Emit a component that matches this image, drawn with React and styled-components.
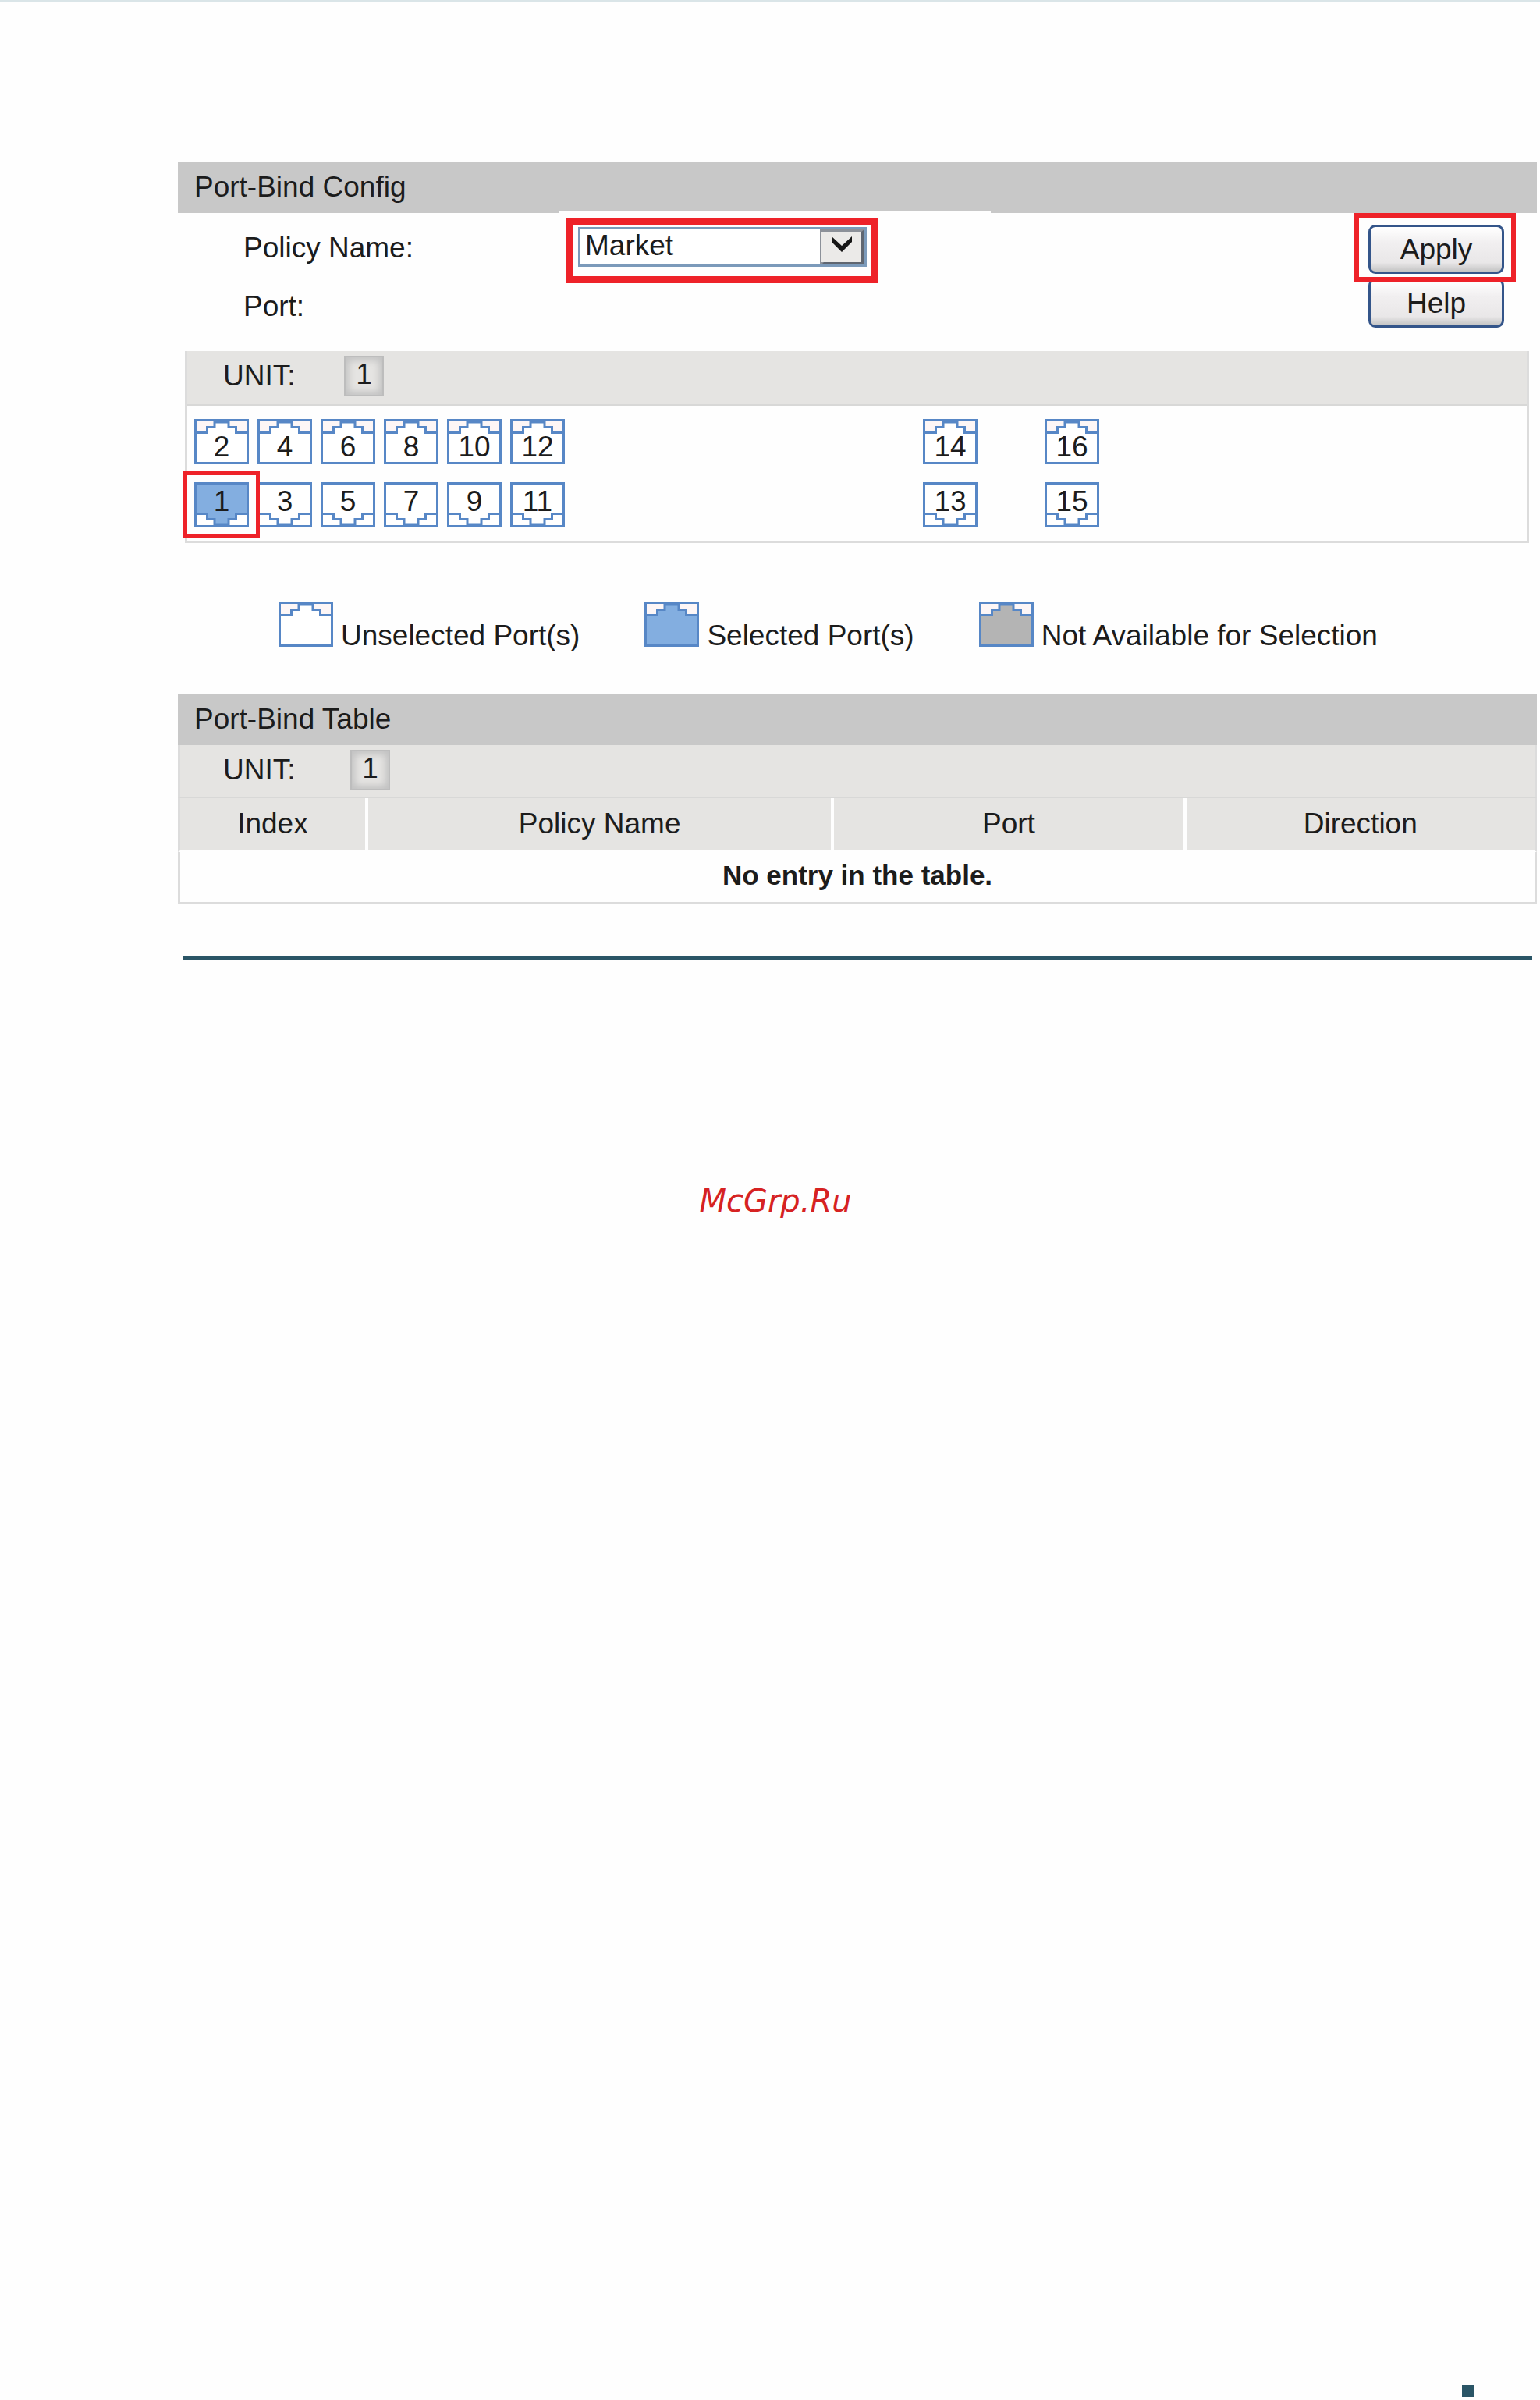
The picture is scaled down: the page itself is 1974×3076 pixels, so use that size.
import React, { useState } from 'react';
import styled, { createGlobalStyle, css } from 'styled-components';

const GlobalStyle = createGlobalStyle`
  * {
    box-sizing: border-box;
  }

  body {
    margin: 0;
    background: #fefefe;
    color: #1c1c1c;
    font-family: 'Liberation Sans', Arial, sans-serif;
    font-size: 37px;
  }

  button,
  select {
    margin: 0;
    color: inherit;
    font-family: inherit;
    font-size: inherit;
  }
`;

const Page = styled.div`
  min-height: 100vh;
  display: flex;
  flex-direction: column;
  border-top: 3px solid #dae5e8;
`;

const Main = styled.main`
  padding: 204px 4px 0 228px;
`;

const SectionTitle = styled.h2`
  height: 66px;
  margin: 0;
  padding-left: 21px;
  background: #c8c8c8;
  font-size: 37px;
  font-weight: 400;
  line-height: 66px;
`;

const ConfigForm = styled.form`
  display: grid;
  grid-template-columns: 405px 553px 1fr;
  grid-template-rows: 82px 75px;
  padding: 0 27px 0 84px;
`;

const labelText = css`
  align-self: end;
  line-height: 75px;
`;

const FieldLabel = styled.label`
  ${labelText}
`;

const FieldName = styled.span`
  ${labelText}
  grid-row: 2;
`;

const FieldCell = styled.div`
  grid-row: span 2;
  align-self: start;
  margin-top: -3px;
  padding: 9px;
  background: #fefefe;
`;

const Highlight = styled.div`
  position: relative;
  z-index: 1;
  width: fit-content;
  border: ${({ $thick }) => $thick}px solid #ee2229;
  padding: ${({ $pad }) => $pad};
`;

const SelectBox = styled.div`
  position: relative;
  display: flex;
`;

const Select = styled.select`
  width: 370px;
  height: 51px;
  padding: 0 60px 4px 6px;
  border: 3px solid #7b9aba;
  border-radius: 0;
  background: #fff;
  font-size: 37px;
  appearance: none;
`;

const SelectArrow = styled.svg`
  position: absolute;
  top: 3px;
  right: 3px;
  pointer-events: none;
`;

const Actions = styled.div`
  grid-row: 1 / span 2;
  grid-column: 3;
  display: flex;
  flex-direction: column;
  align-items: flex-end;
`;

const ActionButton = styled.button`
  display: block;
  width: 174px;
  height: 63px;
  padding: 0;
  border: 3px solid #34558a;
  border-radius: 9px;
  background: linear-gradient(#ffffff, #f1eff0 35%, #e9e7e8 80%, #c4c4c4);
  line-height: 57px;
`;

const HelpButton = styled(ActionButton)`
  margin: -4px 15px 0 0;
`;

const PortPanel = styled.section`
  margin: 20px 10px 0 9px;
  border: solid #dcdcdc;
  border-width: 0 3px 3px;
`;

const UnitBar = styled.div`
  display: flex;
  height: ${({ $height }) => $height}px;
  padding: 0 0 0 ${({ $inset }) => $inset}px;
  border-bottom: 2px solid #d8d8d7;
  background: #e5e4e2;
`;

const UnitLabel = styled.span`
  width: ${({ $width }) => $width}px;
  line-height: 64px;
`;

const UnitButton = styled.button`
  width: 51px;
  height: 52px;
  margin-top: 6px;
  padding: 0 0 4px;
  border: 2px solid #bdbdbd;
  background: #e5e4e2;
  box-shadow: inset 0 0 10px 4px #c2c2c2;
  line-height: 42px;
`;

const PortArea = styled.div`
  display: flex;
  padding: 17px 9px;
`;

const PortBank = styled.div`
  display: grid;
  grid-auto-flow: column;
  grid-template-rows: 58px 58px;
  gap: 23px 11px;
  margin-left: ${({ $offset }) => $offset}px;
`;

const PortButton = styled.button`
  position: relative;
  display: grid;
  width: 70px;
  height: 58px;
  padding: 0;
  border: 0;
  background: none;

  > svg,
  > span {
    grid-area: 1 / 1;
  }
`;

const PortNumber = styled.span`
  z-index: 1;
  padding-top: ${({ $lower }) => ($lower ? 4 : 15)}px;
  line-height: 42px;
`;

const PortMark = styled.i`
  position: absolute;
  inset: -14px;
  z-index: 2;
  border: 5px solid #ee2229;
`;

const Legend = styled.ul`
  display: flex;
  gap: 83px;
  height: 65px;
  margin: 75px 0 53px;
  padding: 0 0 0 129px;
  list-style: none;
`;

const LegendItem = styled.li`
  display: flex;
  gap: 10px;
`;

const LegendText = styled.span`
  align-self: flex-end;
  line-height: 42px;
  white-space: nowrap;
`;

const TableUnitBar = styled(UnitBar)`
  border-right: 3px solid #dcdcdc;
  border-left: 3px solid #dcdcdc;
`;

const Table = styled.table`
  width: 100%;
  border-spacing: 0;
  table-layout: fixed;
  text-align: center;
`;

const HeadCell = styled.th`
  width: ${({ $width }) => $width};
  padding: 0 0 1px;
  border-right: 4px solid #fefefe;
  border-bottom: 2px solid #fefefe;
  background: #e5e4e2;
  font-weight: 400;
  line-height: 66px;

  &:first-child {
    border-left: 3px solid #dcdcdc;
  }

  &:last-child {
    border-right: 3px solid #dcdcdc;
  }
`;

const EmptyCell = styled.td`
  padding: 0 0 4px;
  border: solid #dcdcdc;
  border-width: 0 3px 3px;
  font-size: 35px;
  font-weight: 700;
  line-height: 60px;
`;

const Rule = styled.hr`
  height: 6px;
  margin: 66px 6px 0;
  border: 0;
  background: #2a5566;
`;

const SiteMark = styled.p`
  margin: 284px 0 0;
  padding-left: 14px;
  color: #d62222;
  font-family: 'DejaVu Sans', Verdana, sans-serif;
  font-size: 40px;
  font-style: italic;
  line-height: 48px;
  text-align: center;
`;

const Footer = styled.footer`
  display: flex;
  justify-content: flex-end;
  margin-top: auto;
  padding: 0 85px 4px 0;
`;

const FooterSquare = styled.span`
  width: 15px;
  height: 15px;
  background: #2a5566;
`;

const banks = [
  { offset: 0, ports: [2, 1, 4, 3, 6, 5, 8, 7, 10, 9, 12, 11] },
  { offset: 459, ports: [14, 13] },
  { offset: 86, ports: [16, 15] },
];

const columns = [
  { name: 'Index', width: '14%' },
  { name: 'Policy Name', width: '34.3%' },
  { name: 'Port', width: '25.9%' },
  { name: 'Direction', width: 'auto' },
];

const fills = {
  free: '#ffffff',
  selected: '#83aee0',
  disabled: '#b4b4b4',
};

// RJ45 socket, the latch points up unless lower is set
const PortIcon = ({ state = 'free', lower = false }) => (
  <svg width="70" height="58" viewBox="0 0 70 58" aria-hidden="true">
    <g transform={lower ? 'translate(0 58) scale(1 -1)' : undefined} stroke="#5787c6">
      <rect x="1.5" y="1.5" width="67" height="55" fill={lower ? '#ffffff' : '#fdf6f6'} strokeWidth="3" />
      <path
        d="M1.5 17.5H16.5V10.5H26V4H44V10.5H53.5V17.5H68.5V56.5H1.5Z"
        fill={fills[state]}
        strokeWidth="3"
      />
      <path d="M25 2.5H45" strokeWidth="5" />
    </g>
  </svg>
);

const Unit = ({ as: Bar = UnitBar, height, inset, labelWidth }) => (
  <Bar $height={height} $inset={inset}>
    <UnitLabel $width={labelWidth}>UNIT:</UnitLabel>
    <UnitButton type="button">1</UnitButton>
  </Bar>
);

const App = () => {
  const [policy, setPolicy] = useState('Market');
  const [selected, setSelected] = useState([1]);

  const togglePort = (port) => {
    setSelected((current) =>
      current.includes(port) ? current.filter((p) => p !== port) : [...current, port]
    );
  };

  return (
    <>
      <GlobalStyle />
      <Page>
        <Main>
          <SectionTitle>Port-Bind Config</SectionTitle>
          <ConfigForm onSubmit={(e) => e.preventDefault()}>
            <FieldLabel htmlFor="policy">Policy Name:</FieldLabel>
            <FieldCell>
              <Highlight $thick={9} $pad="3px 6px 12px">
                <SelectBox>
                  <Select id="policy" value={policy} onChange={(e) => setPolicy(e.target.value)}>
                    <option>Market</option>
                  </Select>
                  <SelectArrow width="57" height="45" viewBox="0 0 57 45" aria-hidden="true">
                    <rect width="57" height="45" fill="#8c9199" />
                    <path d="M57 0V45H2L5 42H53V3Z" fill="#5f6670" />
                    <rect x="2" y="3" width="51" height="39" fill="#ebeae8" />
                    <path d="M15 9L28 21L41 9V16L28 29L15 16Z" fill="#161616" />
                  </SelectArrow>
                </SelectBox>
              </Highlight>
            </FieldCell>
            <FieldName>Port:</FieldName>
            <Actions>
              <Highlight $thick={6} $pad="9px 9px 4px 12px">
                <ActionButton type="submit">Apply</ActionButton>
              </Highlight>
              <HelpButton type="button">Help</HelpButton>
            </Actions>
          </ConfigForm>

          <PortPanel>
            <Unit height={70} inset={46} labelWidth={155} />
            <PortArea>
              {banks.map((bank) => (
                <PortBank key={bank.offset} $offset={bank.offset}>
                  {bank.ports.map((port) => {
                    const lower = port % 2 === 1;
                    const on = selected.includes(port);
                    return (
                      <PortButton
                        key={port}
                        type="button"
                        aria-pressed={on}
                        onClick={() => togglePort(port)}
                      >
                        <PortIcon state={on ? 'selected' : 'free'} lower={lower} />
                        <PortNumber $lower={lower}>{port}</PortNumber>
                        {port === 1 && <PortMark />}
                      </PortButton>
                    );
                  })}
                </PortBank>
              ))}
            </PortArea>
          </PortPanel>

          <Legend>
            <LegendItem>
              <PortIcon />
              <LegendText>Unselected Port(s)</LegendText>
            </LegendItem>
            <LegendItem>
              <PortIcon state="selected" />
              <LegendText>Selected Port(s)</LegendText>
            </LegendItem>
            <LegendItem>
              <PortIcon state="disabled" />
              <LegendText>Not Available for Selection</LegendText>
            </LegendItem>
          </Legend>

          <SectionTitle>Port-Bind Table</SectionTitle>
          <Unit as={TableUnitBar} height={68} inset={55} labelWidth={163} />
          <Table>
            <thead>
              <tr>
                {columns.map((column) => (
                  <HeadCell key={column.name} scope="col" $width={column.width}>
                    {column.name}
                  </HeadCell>
                ))}
              </tr>
            </thead>
            <tbody>
              <tr>
                <EmptyCell colSpan={columns.length}>No entry in the table.</EmptyCell>
              </tr>
            </tbody>
          </Table>
          <Rule />
        </Main>
        <SiteMark>McGrp.Ru</SiteMark>
        <Footer>
          <FooterSquare />
        </Footer>
      </Page>
    </>
  );
};

export default App;
